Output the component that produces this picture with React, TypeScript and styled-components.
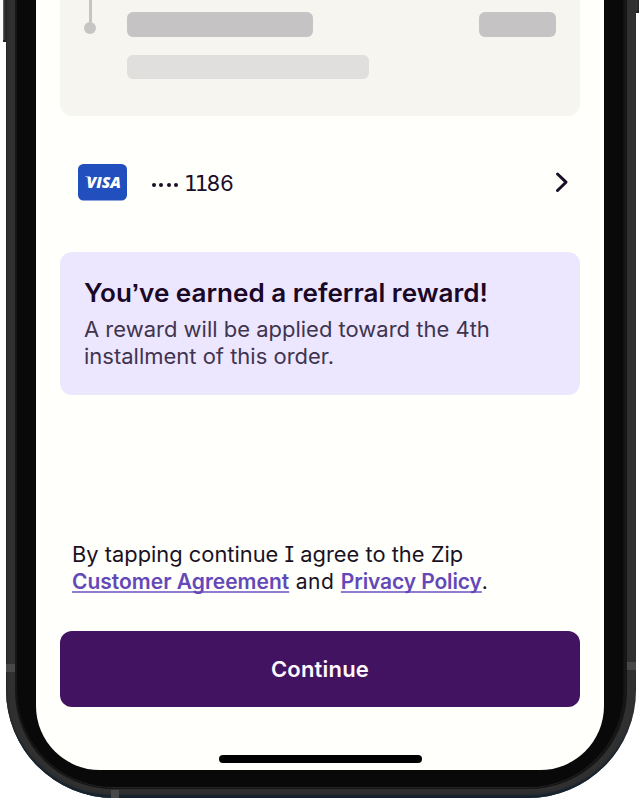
import React from "react";
import styled, { createGlobalStyle } from "styled-components";

const GlobalStyle = createGlobalStyle`
  *, *::before, *::after { box-sizing: border-box; }
  body {
    margin: 0;
    background: #fff;
    font-family: Inter, "Liberation Sans", sans-serif;
    overflow: hidden;
  }
`;

const Stage = styled.main`
  position: relative;
  width: 641px;
  height: 800px;
  overflow: hidden;
`;

const PhoneFrame = styled.div`
  position: relative;
  width: 630px;
  height: 798px;
  margin-left: 6px;
  padding: 0 9px 9px;
  overflow: hidden;
  background: #303030;
  border-radius: 0 0 108px 108px;
  box-shadow: inset 0 -4px 2px -1px #152330, inset 1px 0 1px #282828;
`;

const Bezel = styled.div`
  height: 789px;
  padding-left: 18.5px;
  background: #090909;
  border: solid #161616;
  border-width: 0 3px 1px 2px;
  border-radius: 0 0 98px 98px;
  box-shadow: inset 0 -1px 0 #242424, inset -1px 0 0 #111;
  display: flex;
`;

const SideKey = styled.i<{ $side: "left" | "right"; $height: number }>`
  position: absolute;
  top: 0;
  ${({ $side }) => $side}: 2.5px;
  width: 4px;
  height: ${({ $height }) => $height}px;
  background: linear-gradient(90deg, #777, #333 40%, #222);
  border-bottom: 2px solid #222;
`;

const AntennaBand = styled.i<{ $x: number; $y: number; $w: number; $h: number }>`
  position: absolute;
  left: ${({ $x }) => $x}px;
  top: ${({ $y }) => $y}px;
  width: ${({ $w }) => $w}px;
  height: ${({ $h }) => $h}px;
  background: #484848;
`;

const Screen = styled.section`
  flex: none;
  width: 568px;
  height: 769.5px;
  padding: 0 23.5px 0 24.5px;
  background: #fffffc;
  border-radius: 0 0 64px 64px;
  display: flex;
  flex-direction: column;
`;

const OrderSummary = styled.div`
  display: flex;
  height: 115.5px;
  padding-left: 24px;
  background: #f6f5f0;
  border-radius: 0 0 12px 12px;
`;

const Timeline = styled.div`
  width: 12px;
  margin-right: 30.5px;
  display: flex;
  flex-direction: column;
  align-items: center;
  &::before {
    content: "";
    width: 3px;
    height: 21.5px;
    background: #c7c5c3;
  }
  &::after {
    content: "";
    width: 12px;
    height: 12px;
    background: #c7c5c3;
    border-radius: 50%;
  }
`;

const SummaryLines = styled.div`
  flex: 1;
  display: flex;
  flex-direction: column;
  gap: 18px;
  padding: 12.3px 24px 0 0;
`;

const SummaryLine = styled.div`
  display: flex;
  justify-content: space-between;
`;

const Placeholder = styled.span<{ $width: number; $light?: boolean }>`
  width: ${({ $width }) => $width}px;
  height: 24.4px;
  border-radius: 6px;
  background: ${({ $light }) => ($light ? "#e0dfdd" : "#c5c3c3")};
`;

const PaymentMethod = styled.div`
  display: flex;
  align-items: center;
  height: 136.5px;
  padding: 0 11px 3px 18px;
`;

const CardBadge = styled.svg`
  display: block;
  width: 49px;
  height: 37px;
`;

const MaskDots = styled.span`
  display: flex;
  gap: 3.3px;
  margin: 5px 0 0 25px;
  i {
    width: 4px;
    height: 4px;
    border-radius: 50%;
    background: #1a0e28;
  }
`;

const CardNumber = styled.span`
  margin: 4px 0 0 7px;
  font-size: 21px;
  line-height: 27px;
  color: #1a0e28;
  white-space: nowrap;
  transform: scaleX(1.03);
  transform-origin: left;
`;

const SlabDigits = styled.span`
  font-family: "DejaVu Sans", sans-serif;
  font-size: 21px;
  letter-spacing: -3px;
  margin-right: 1.5px;
  margin-left: -1px;
`;

const Chevron = styled.svg`
  margin-left: auto;
  width: 14px;
  height: 22px;
`;

const RewardCard = styled.article`
  height: 142.5px;
  padding: 25px 24px 0;
  background: #ece6fe;
  border-radius: 12px;
`;

const RewardTitle = styled.h1`
  margin: 0 0 7px;
  font-size: 25px;
  line-height: 32px;
  font-weight: 600;
  color: #1a0826;
  white-space: nowrap;
  transform: scaleX(1.042);
  transform-origin: left;
`;

const CurlyMark = styled.span`
  font-family: "Liberation Sans", sans-serif;
`;

const RewardText = styled.p`
  margin: 0;
  font-size: 21px;
  line-height: 27.3px;
  color: #3f344e;
  white-space: nowrap;
  transform: scaleX(1.047);
  transform-origin: left;
`;

const Legal = styled.p`
  margin: 146px 0 0;
  padding-left: 12px;
  font-size: 21px;
  line-height: 27.3px;
  color: #1a1122;
  white-space: nowrap;
`;

const LegalLead = styled.span`
  display: block;
  transform: scaleX(1.041);
  transform-origin: left;
`;

const LegalLinks = styled.span`
  display: block;
  letter-spacing: 0.55px;
`;

const SerifCapital = styled.span`
  font-feature-settings: "cv08";
`;

const LegalLink = styled.a<{ $tracking: number }>`
  font-weight: 600;
  letter-spacing: ${({ $tracking }) => $tracking}px;
  color: #6548b8;
  text-decoration: underline;
  text-decoration-thickness: 2px;
  text-decoration-color: #917cd2;
  text-underline-offset: 1.5px;
  text-decoration-skip-ink: none;
`;

const ContinueButton = styled.button`
  width: 100%;
  height: 76px;
  margin-top: 36px;
  padding: 0 0 1px;
  border: 0;
  border-radius: 12px;
  background: #421361;
  color: #fff8ff;
  font: 600 22px/28px Inter, sans-serif;
  letter-spacing: 0.2px;
`;

const HomeIndicator = styled.div`
  align-self: center;
  width: 203px;
  height: 8px;
  margin: 48px 0 0 1px;
  border-radius: 4px;
  background: #000;
`;

export default function App() {
  return (
    <>
      <GlobalStyle />
      <Stage>
        <SideKey $side="left" $height={42} />
        <SideKey $side="right" $height={13} />
        <PhoneFrame>
          <AntennaBand $x={0} $y={664} $w={9} $h={8} />
          <AntennaBand $x={621} $y={662} $w={9} $h={8} />
          <AntennaBand $x={105} $y={790} $w={8} $h={8} />
          <Bezel>
            <Screen>
              <OrderSummary>
                <Timeline />
                <SummaryLines>
                  <SummaryLine>
                    <Placeholder $width={186.5} />
                    <Placeholder $width={77.5} />
                  </SummaryLine>
                  <SummaryLine>
                    <Placeholder $width={242} $light />
                  </SummaryLine>
                </SummaryLines>
              </OrderSummary>

              <PaymentMethod>
                <CardBadge viewBox="0 0 49 37">
                  <rect width="49" height="36.6" rx="5.5" fill="#214fbd" />
                  <path d="M7 12.4h5l1.5 4.6C12 14.6 10 13.2 7 12.8z" fill="#fff" />
                  <text
                    x="8.5"
                    y="24.3"
                    textLength="34.5"
                    lengthAdjust="spacingAndGlyphs"
                    fill="#fff"
                    fontFamily="Open Sans, sans-serif"
                    fontSize="16.5"
                    fontWeight="800"
                    fontStyle="italic"
                  >
                    VISA
                  </text>
                </CardBadge>
                <MaskDots>
                  <i />
                  <i />
                  <i />
                  <i />
                </MaskDots>
                <CardNumber>
                  <SlabDigits>11</SlabDigits>86
                </CardNumber>
                <Chevron viewBox="0 0 14 22" fill="none" stroke="#1a0e28" strokeWidth="3">
                  <path d="M2.5 3 11 11.2 2.5 19.5" strokeLinecap="round" strokeLinejoin="round" />
                </Chevron>
              </PaymentMethod>

              <RewardCard>
                <RewardTitle>
                  You<CurlyMark>’</CurlyMark>ve earned a referral reward!
                </RewardTitle>
                <RewardText>
                  A reward will be applied toward the 4th
                  <br />
                  installment of this order.
                </RewardText>
              </RewardCard>

              <Legal>
                <LegalLead>
                  By tapping continue <SerifCapital>I</SerifCapital> agree to the Zip
                </LegalLead>
                <LegalLinks>
                  <LegalLink $tracking={0}>Customer Agreement</LegalLink> and{" "}
                  <LegalLink $tracking={-0.12}>Privacy Policy</LegalLink>.
                </LegalLinks>
              </Legal>

              <ContinueButton>Continue</ContinueButton>
              <HomeIndicator />
            </Screen>
          </Bezel>
        </PhoneFrame>
      </Stage>
    </>
  );
}
